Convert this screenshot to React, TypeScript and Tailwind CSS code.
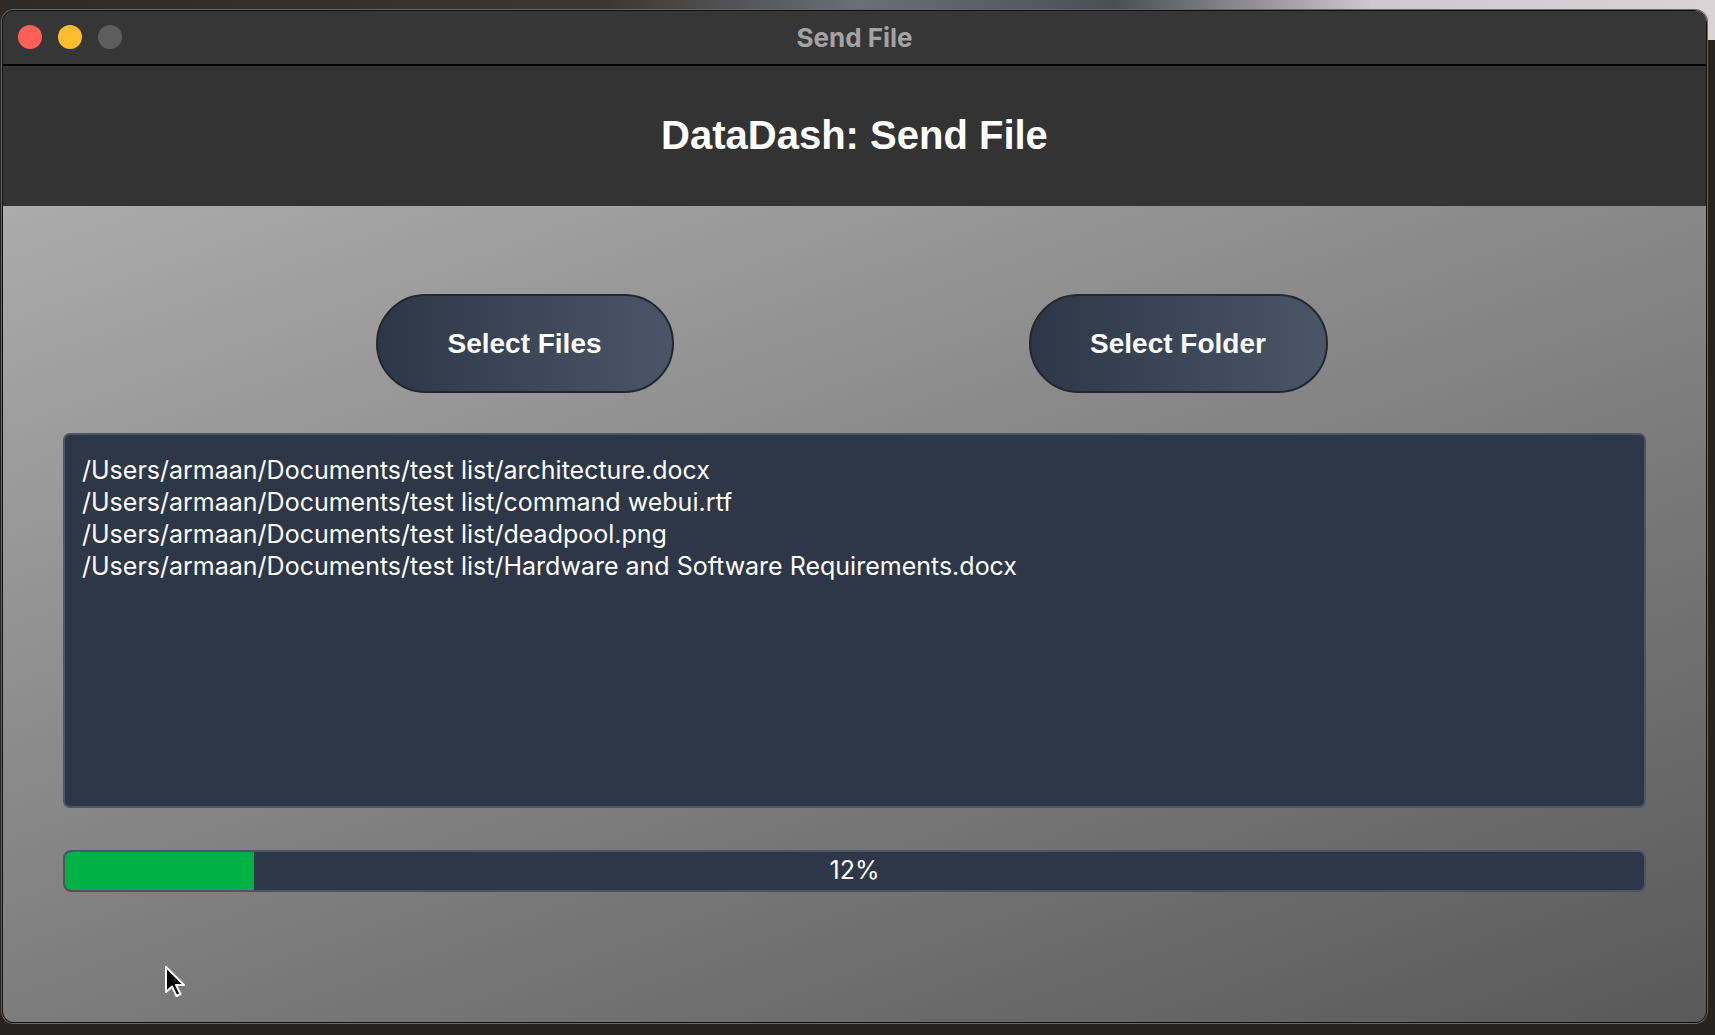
import React from "react";

const files = [
  "/Users/armaan/Documents/test list/architecture.docx",
  "/Users/armaan/Documents/test list/command webui.rtf",
  "/Users/armaan/Documents/test list/deadpool.png",
  "/Users/armaan/Documents/test list/Hardware and Software Requirements.docx",
];

const progress = 12;

function Cursor() {
  return (
    <svg
      className="absolute left-[160px] top-[962px]"
      width="30"
      height="40"
      viewBox="0 0 30 40"
    >
      <path
        d="M6 5 L6 30 L12 24.5 L16.5 34 L20.5 32 L16 23 L24 23 Z"
        fill="#000"
        stroke="#fff"
        strokeWidth="2"
        strokeLinejoin="round"
      />
    </svg>
  );
}

export default function App() {
  return (
    <div className="relative h-screen w-full overflow-hidden bg-[linear-gradient(90deg,#2d2a27_0%,#3a3631_35%,#6b6f78_50%,#4a4e55_65%,#cfc8cc_80%,#d9d3d6_100%)] pl-[2px] pr-[8px] pt-[10px] pb-[12px]">
      <div className="absolute inset-x-0 bottom-0 top-[40px] bg-[#25221f]" />
      <div className="relative flex h-full flex-col overflow-hidden rounded-[12px] border border-[#111] shadow-[0_0_0_1px_#666]">
        {/* titlebar */}
        <div className="relative flex h-[55px] shrink-0 items-center justify-center border-b-2 border-black bg-[#363636]">
          <div className="absolute left-[15px] top-[14px] flex gap-4">
            <span className="h-6 w-6 rounded-full bg-[#fe5f57]" />
            <span className="h-6 w-6 rounded-full bg-[#febc2e]" />
            <span className="h-6 w-6 rounded-full bg-[#5d5d5d]" />
          </div>
          <span className="font-['Inter',sans-serif] text-[26px] font-bold text-[#a3a3a3]">
            Send File
          </span>
        </div>

        {/* header */}
        <div className="flex h-[140px] shrink-0 items-center justify-center bg-[#333333] pb-[3px]">
          <h1 className="font-['Liberation_Sans',Arial,sans-serif] text-[40px] font-bold text-white">
            DataDash: Send File
          </h1>
        </div>

        {/* body */}
        <div className="flex flex-1 flex-col bg-[linear-gradient(160deg,#ababab_0%,#8a8a8a_40%,#6e6e6e_75%,#595959_100%)] px-[60px] pt-[88px]">
          <div className="flex justify-center gap-[355px] pr-[6px]">
            <button className="h-[99px] w-[298px] rounded-full border-2 border-[#24282e] bg-[linear-gradient(90deg,#2d3748,#4a5568)] font-['Liberation_Sans',Arial,sans-serif] text-[28px] font-bold text-white">
              Select Files
            </button>
            <button className="h-[99px] w-[299px] rounded-full border-2 border-[#24282e] bg-[linear-gradient(90deg,#2d3748,#4a5568)] font-['Liberation_Sans',Arial,sans-serif] text-[28px] font-bold text-white">
              Select Folder
            </button>
          </div>

          <div className="mt-[40px] h-[375px] rounded-[7px] border-2 border-[#4a5568] bg-[#2d3748] px-[17px] pt-[19px] font-['Inter',sans-serif] text-[25px] leading-[32px] text-white">
            {files.map((f) => (
              <div key={f}>{f}</div>
            ))}
          </div>

          <div className="relative mt-[42px] flex h-[42px] items-center justify-center overflow-hidden rounded-[8px] border-2 border-[#4a5568] bg-[#2d3748]">
            <div
              className="absolute inset-y-0 left-0 bg-[#00b243]"
              style={{ width: `${progress}%` }}
            />
            <span className="relative font-['Inter',sans-serif] text-[25px] text-white">
              {progress}%
            </span>
          </div>
        </div>
      </div>
      <Cursor />
    </div>
  );
}
